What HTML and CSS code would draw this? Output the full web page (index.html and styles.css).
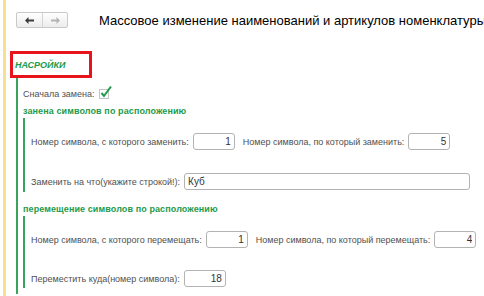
FILE: index.html
```html
<!DOCTYPE html>
<html lang="ru">
<head>
    <meta charset="UTF-8">
    <title>Массовое изменение наименований и артикулов номенклатуры</title>
    <link rel="stylesheet" href="styles.css">
</head>
<body>
    <div class="page">
        <header class="top">
            <div class="nav-buttons">
                <button type="button" class="nav-btn">
                    <svg width="9" height="7" viewBox="0 0 9 7"><path d="M0 3.5 L3.5 0 L3.5 2.5 L9 2.5 L9 4.5 L3.5 4.5 L3.5 7 Z" fill="#3c3c3c"/></svg>
                </button>
                <button type="button" class="nav-btn">
                    <svg width="9" height="7" viewBox="0 0 9 7"><path d="M9 3.5 L5.5 0 L5.5 2.5 L0 2.5 L0 4.5 L5.5 4.5 L5.5 7 Z" fill="#b4b4b4"/></svg>
                </button>
            </div>
            <h1 class="title">Массовое изменение наименований и артикулов номенклатуры</h1>
        </header>

        <section class="settings">
            <div class="settings-head">НАСРОЙКИ</div>
            <div class="settings-body">
                <div class="row">
                    <label>Сначала замена:</label>
                    <span class="check">
                        <svg width="14" height="14" viewBox="0 0 14 14">
                            <rect x="0.5" y="4.5" width="9" height="9" fill="#fff" stroke="#c4c4c4"/>
                            <path d="M2.5 8 L5 11 L12 1.5" fill="none" stroke="#1e9a4b" stroke-width="2"/>
                        </svg>
                    </span>
                </div>

                <h3 class="sub-title">занена символов по расположению</h3>
                <div class="sub-group">
                    <div class="row">
                        <label>Номер символа, с которого заменить:</label>
                        <input class="num" type="text" value="1">
                        <label class="second">Номер символа, по который заменить:</label>
                        <input class="num" type="text" value="5">
                    </div>
                    <div class="row">
                        <label>Заменить на что(укажите строкой!):</label>
                        <input class="text" type="text" value="Куб">
                    </div>
                </div>

                <h3 class="sub-title second-title">перемещение символов по расположению</h3>
                <div class="sub-group move">
                    <div class="row">
                        <label>Номер символа, с которого перемещать:</label>
                        <input class="num" type="text" value="1">
                        <label class="second">Номер символа, по который перемещать:</label>
                        <input class="num" type="text" value="4">
                    </div>
                    <div class="row">
                        <label>Переместить куда(номер символа):</label>
                        <input class="num" type="text" value="18">
                    </div>
                </div>
            </div>
        </section>
    </div>
</body>
</html>
```

FILE: styles.css
```css
/* Page frame */
html, body {
    margin: 0;
    height: 100%;
    background-color: white;
    font-family: "Liberation Sans", Arial, sans-serif;
    overflow: hidden;
}
.page {
    margin-left: 3px;
    border-left: 3px solid #f8e18e;
    min-height: 100%;
    box-sizing: border-box;
}

/* Header */
.top {
    display: flex;
    align-items: center;
    padding: 12px 0 0 10px;
    white-space: nowrap;
    overflow: hidden;
}
.nav-buttons {
    display: flex;
    flex-shrink: 0;
    border: 1px solid #c9c9c9;
    border-radius: 2px;
    background: linear-gradient(#ffffff, #ececec);
}
.nav-btn {
    width: 25px;
    height: 14px;
    padding: 0;
    border: none;
    background: transparent;
    display: flex;
    align-items: center;
    justify-content: center;
}
.nav-btn + .nav-btn {
    border-left: 1px solid #d4d4d4;
}
.title {
    margin: 0 0 0 31px;
    font-size: 13px;
    font-weight: normal;
    color: #000;
}

/* Settings group */
.settings {
    margin-top: 23px;
}
.settings-head {
    margin-left: 4px;
    width: 82px;
    height: 27px;
    box-sizing: border-box;
    border: 3px solid #e8141b;
    padding-left: 2px;
    display: flex;
    align-items: center;
    font-size: 9px;
    font-weight: bold;
    font-style: italic;
    color: #1e9a4b;
}
.settings-body {
    margin-left: 10px;
    border-left: 2px solid #3aa35b;
    padding: 11px 0 6px 5px;
}

/* Rows */
.row {
    display: flex;
    align-items: center;
    gap: 4px;
    font-size: 9px;
    color: #505050;
    white-space: nowrap;
}
.row .second {
    margin-left: 4px;
}
.check {
    display: flex;
    margin-top: -4px;
}
.sub-title {
    margin: 6px 0 1px 0;
    font-size: 9px;
    line-height: 12px;
    letter-spacing: 0.1px;
    font-weight: bold;
    color: #1e9a4b;
}
.second-title {
    margin-top: 11px;
}
.sub-group {
    border-left: 2px solid #3aa35b;
    padding: 15px 0 2px 6px;
    display: flex;
    flex-direction: column;
    gap: 23px;
}
.sub-group.move {
    gap: 22px;
    padding-bottom: 1px;
}

/* Inputs */
input {
    height: 17px;
    box-sizing: border-box;
    border: 1px solid #b3b3b3;
    border-radius: 3px;
    padding: 0 3px;
    font-family: "Liberation Sans", Arial, sans-serif;
    font-size: 10px;
    color: #333;
    background: white;
}
input.num {
    width: 42px;
    text-align: right;
}
input.text {
    width: 286px;
}
```
